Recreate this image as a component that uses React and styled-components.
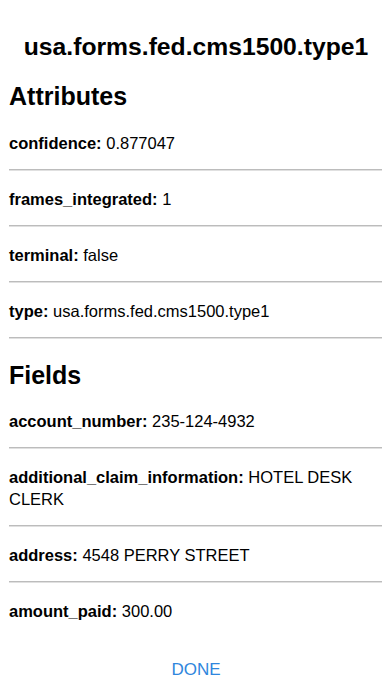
import React from "react";
import styled, { createGlobalStyle } from "styled-components";

const Global = createGlobalStyle`
  html, body { margin: 0; padding: 0; background: #fff; }
  body { font-family: "Liberation Sans", Arial, sans-serif; color: #000; }
`;

const Screen = styled.div`
  width: 392px;
  height: 696px;
  display: flex;
  flex-direction: column;
  overflow: hidden;
  box-sizing: border-box;
`;

const Title = styled.h1`
  margin: 35px 0 0;
  font-size: 24.7px;
  line-height: 24px;
  font-weight: 700;
  text-align: center;
`;

const Content = styled.div`
  flex: 1;
  padding: 0 10px 0 9px;
  overflow: hidden;
`;

const SectionTitle = styled.h2`
  margin: ${(p) => p.$top}px 0 0;
  font-size: 25px;
  line-height: 28px;
  font-weight: 700;
  height: ${(p) => p.$h}px;
`;

const Row = styled.div`
  padding: 18px 0 15px;
  font-size: 16.5px;
  line-height: 22px;
  border-bottom: ${(p) => (p.$last ? "1px solid transparent" : "1px solid #bcbcbc")};
  box-shadow: ${(p) => (p.$last ? "none" : "0 1px 0 #e0e0e0")};
`;

const Key = styled.b`
  font-weight: 700;
`;

const Footer = styled.div`
  display: flex;
  justify-content: center;
  padding: 0 0 16px;
`;

const DoneButton = styled.button`
  border: none;
  background: none;
  font-family: "Liberation Sans", Arial, sans-serif;
  font-size: 17px;
  color: #2f86dd;
  padding: 0;
  line-height: 20px;
`;

const attributes = [
  ["confidence", "0.877047"],
  ["frames_integrated", "1"],
  ["terminal", "false"],
  ["type", "usa.forms.fed.cms1500.type1"],
];

const fields = [
  ["account_number", "235-124-4932"],
  ["additional_claim_information", "HOTEL DESK CLERK"],
  ["address", "4548 PERRY STREET"],
  ["amount_paid", "300.00"],
];

export default function App() {
  return (
    <Screen>
      <Global />
      <Title>usa.forms.fed.cms1500.type1</Title>
      <Content>
        <SectionTitle $top={23} $h={32}>Attributes</SectionTitle>
        {attributes.map(([k, v]) => (
          <Row key={k}>
            <Key>{k}:</Key> {v}
          </Row>
        ))}
        <SectionTitle $top={23} $h={31}>Fields</SectionTitle>
        {fields.map(([k, v], i) => (
          <Row key={k} $last={i === fields.length - 1}>
            <Key>{k}:</Key> {v}
          </Row>
        ))}
      </Content>
      <Footer>
        <DoneButton>DONE</DoneButton>
      </Footer>
    </Screen>
  );
}
